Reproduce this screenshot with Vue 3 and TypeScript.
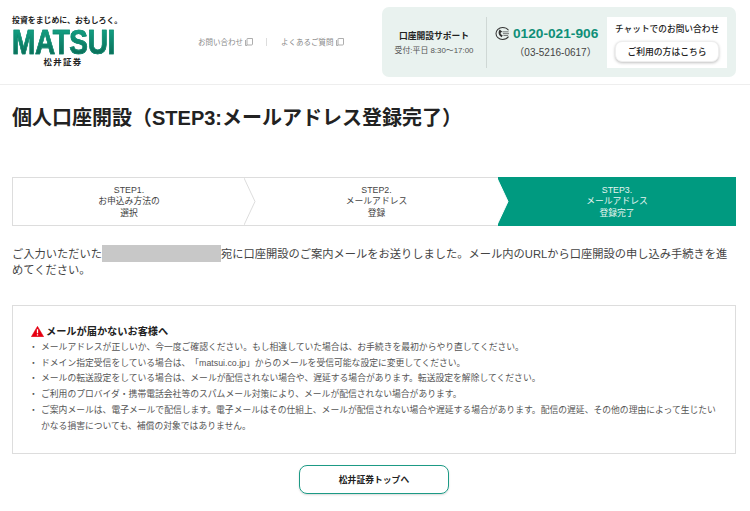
<script setup lang="ts">
interface Step { no: string; lines: string[]; active?: boolean }
const steps: Step[] = [
  { no: 'STEP1.', lines: ['お申込み方法の', '選択'] },
  { no: 'STEP2.', lines: ['メールアドレス', '登録'] },
  { no: 'STEP3.', lines: ['メールアドレス', '登録完了'], active: true },
]
const notes: string[] = [
  'メールアドレスが正しいか、今一度ご確認ください。もし相違していた場合は、お手続きを最初からやり直してください。',
  'ドメイン指定受信をしている場合は、「matsui.co.jp」からのメールを受信可能な設定に変更してください。',
  'メールの転送設定をしている場合は、メールが配信されない場合や、遅延する場合があります。転送設定を解除してください。',
  'ご利用のプロバイダ・携帯電話会社等のスパムメール対策により、メールが配信されない場合があります。',
  'ご案内メールは、電子メールで配信します。電子メールはその仕組上、メールが配信されない場合や遅延する場合があります。配信の遅延、その他の理由によって生じたいかなる損害についても、補償の対象ではありません。',
]
</script>

<template>
  <div class="page">
    <header class="header">
      <div class="logo">
        <div class="tagline">投資をまじめに、おもしろく。</div>
        <div class="wordmark"><span>MATSUI</span></div>
        <div class="kanji">松井証券</div>
      </div>
      <nav class="links">
        <a class="link">お問い合わせ
          <svg class="ext" viewBox="0 0 8 8" width="8" height="8"><path d="M2.5 .5h5v5.500a1 1 0 0 1-1 1h-4.500v-6a.5.5 0 0 1 .5-.5z" fill="none" stroke="#999" stroke-width=".8"/><path d="M.5 2v5.500h1.500" fill="none" stroke="#999" stroke-width=".8"/></svg>
        </a>
        <span class="sep"></span>
        <a class="link">よくあるご質問
          <svg class="ext" viewBox="0 0 8 8" width="8" height="8"><path d="M2.5 .5h5v5.500a1 1 0 0 1-1 1h-4.500v-6a.5.5 0 0 1 .5-.5z" fill="none" stroke="#999" stroke-width=".8"/><path d="M.5 2v5.500h1.500" fill="none" stroke="#999" stroke-width=".8"/></svg>
        </a>
      </nav>
      <section class="support">
        <div class="sup-label">
          <strong>口座開設サポート</strong>
          <span>受付:平日 8:30～17:00</span>
        </div>
        <div class="sup-phone">
          <div class="tel">
            <svg viewBox="0 0 16 14" width="15" height="13"><path d="M14.500 3.500C13 1.500 10.500.6 8 .6 4 .6 1 3.500 1 7s3 6.400 7 6.400c2.500 0 5-1 6.500-3" fill="none" stroke="#333" stroke-width="1.100"/><path d="M5 2.800c-2 2.500-1.500 6 2 8.300l1.300-1.900-2-1.300c-.4-.7-.4-1.500-.1-2.100l1.600-.8z" fill="#333"/><path d="M8 5.200h6.500M8.500 7.200h6.500M9 9.200h5" stroke="#333" stroke-width=".7"/></svg>
            <b>0120-021-906</b>
          </div>
          <div class="tel-sub">（03-5216-0617）</div>
        </div>
        <div class="sup-chat">
          <div class="chat-title">チャットでのお問い合わせ</div>
          <button class="chat-btn">ご利用の方はこちら</button>
        </div>
      </section>
    </header>

    <main class="main">
      <h1 class="title">個人口座開設（STEP3:メールアドレス登録完了）</h1>

      <ol class="steps">
        <li v-for="s in steps" :key="s.no" class="step" :class="{ active: s.active }">
          <span>{{ s.no }}</span>
          <span v-for="l in s.lines" :key="l">{{ l }}</span>
          <svg v-if="!s.active" class="chev" viewBox="0 0 12 48" width="12" height="48" preserveAspectRatio="none"><path d="M0 0L11 24L0 48" fill="#fff" stroke="#ddd" stroke-width="1"/></svg>
        </li>
      </ol>

      <p class="lead">ご入力いただいた<span class="mask"></span>宛に口座開設のご案内メールをお送りしました。メール内のURLから口座開設の申し込み手続きを進めてください。</p>

      <section class="notice">
        <h2 class="notice-title">
          <svg viewBox="0 0 14 12" width="13" height="11"><path d="M7 .4L13.700 11.700H.3z" fill="#e60012" stroke="#e60012" stroke-width=".6" stroke-linejoin="round"/><path d="M7 3.500v4.500M7 9v1.400" stroke="#fff" stroke-width="1.400"/></svg>
          メールが届かないお客様へ
        </h2>
        <ul class="notes">
          <li v-for="n in notes" :key="n">{{ n }}</li>
        </ul>
      </section>

      <div class="actions">
        <a class="top-btn">松井証券トップへ</a>
      </div>
    </main>
  </div>
</template>

<style>
html, body { margin: 0; background: #fff; }
</style>

<style scoped>
.page {
  width: 750px;
  height: 511px;
  overflow: hidden;
  font-family: "Liberation Sans", "Noto Sans CJK JP", sans-serif;
  color: #333;
}
.header {
  height: 84px;
  border-bottom: 1px solid #eee;
  display: flex;
  align-items: flex-start;
  box-sizing: content-box;
  padding: 0 14px 0 12px;
}
.logo { width: 108px; margin-top: 16px; display: flex; flex-direction: column; }
.tagline { font-size: 7.900px; font-weight: 700; line-height: 10px; white-space: nowrap; color: #222; }
.wordmark { height: 27px; line-height: 27px; margin-top: 3px; }
.wordmark span {
  display: inline-block;
  font-size: 35px;
  line-height: 26px;
  font-weight: 700;
  letter-spacing: -.5px;
  transform: scale(.8, 1);
  transform-origin: 0 50%;
  background: linear-gradient(#12a083, #0b6d58);
  -webkit-background-clip: text;
  background-clip: text;
  color: transparent;
  -webkit-text-stroke: .7px #0f8a70;
  white-space: nowrap;
}
.kanji { font-size: 8.400px; font-weight: 700; text-align: center; width: 102px; line-height: 11px; color: #222; font-family: "Noto Sans CJK JP", serif; letter-spacing: 1.400px; }
.links { display: flex; align-items: center; margin: 36px 0 0 78px; width: 192px; font-size: 7.500px; color: #888; }
.link { display: inline-flex; align-items: center; gap: 2px; white-space: nowrap; }
.sep { width: 1px; height: 8px; background: #ddd; margin: 0 14px 0 13px; }
.support {
  margin: 7px 0 0 auto;
  width: 354px;
  height: 70px;
  box-sizing: border-box;
  background: #e9f2ef;
  border-radius: 7px;
  display: flex;
  align-items: center;
  padding: 9px;
}
.sup-label {
  width: 86px;
  margin-right: 9px;
  display: flex;
  flex-direction: column;
  align-items: center;
  gap: 2px;
  font-size: 7.900px;
  color: #555;
  white-space: nowrap;
}
.sup-label strong { font-size: 8.750px; color: #222; font-weight: 700; }
.sup-phone {
  height: 51px;
  width: 121px;
  border-left: 1px solid #cfd8d5;
  display: flex;
  flex-direction: column;
  justify-content: center;
  padding-left: 8px;
  box-sizing: border-box;
  gap: 3px;
}
.tel { display: flex; align-items: center; gap: 3px; }
.tel b { font-size: 13.700px; color: #0f8f78; font-weight: 700; white-space: nowrap; }
.tel-sub { font-size: 10px; color: #444; white-space: nowrap; text-align: center; padding-left: 9px; }
.sup-chat {
  width: 120px;
  height: 51px;
  background: #fff;
  box-sizing: border-box;
  display: flex;
  flex-direction: column;
  align-items: center;
  justify-content: flex-start;
  padding-top: 6px;
}
.chat-title { font-size: 8.700px; line-height: 12px; color: #222; white-space: nowrap; font-weight: 500; }
.chat-btn {
  margin-top: 6px;
  width: 104px;
  height: 21px;
  padding: 0;
  border: 1px solid #eee;
  border-radius: 7px;
  background: #fff;
  box-shadow: 0 1px 3px rgba(0,0,0,.25);
  font: 500 8.800px "Liberation Sans", "Noto Sans CJK JP", sans-serif;
  color: #222;
}
.main { padding: 0 14px 0 12px; }
.title { margin: 21px 0 0; font-size: 20px; line-height: 24px; font-weight: 700; color: #222; white-space: nowrap; }
.steps {
  list-style: none;
  margin: 47px 0 0;
  padding: 0;
  height: 49px;
  box-sizing: border-box;
  border: 1px solid #ddd;
  display: grid;
  grid-template-columns: 232px 253px 1fr;
}
.step {
  position: relative;
  display: flex;
  flex-direction: column;
  align-items: center;
  justify-content: center;
  padding-top: 1px;
  font-size: 8.800px;
  line-height: 11.500px;
  color: #444;
}
.step:nth-child(2) { padding-left: 10px; }
.step.active {
  background: #009a80;
  color: #e6f5f1;
  margin: -1px -1px -1px 0;
}
.chev { position: absolute; right: -11px; top: 0; height: 47px; z-index: 1; }
.step:nth-child(2) .chev path { stroke: #fff; }
.lead { margin: 19px 0 0; font-size: 11.250px; line-height: 16px; color: #444; }
.mask { display: inline-block; width: 119px; height: 17px; background: #c8c8c8; vertical-align: -4px; }
.notice {
  margin-top: 27px;
  height: 149px;
  box-sizing: border-box;
  border: 1px solid #ddd;
  padding: 18px 18px 0 18px;
}
.notice-title {
  margin: 0;
  display: flex;
  align-items: center;
  gap: 2px;
  font-size: 10.200px;
  line-height: 15px;
  font-weight: 700;
  color: #222;
}
.notes { list-style: none; margin: 1px 0 0; padding: 0 0 0 10px; font-size: 8.800px; line-height: 15.700px; color: #555; text-spacing-trim: space-all; }
.notes li { position: relative; }
.notes li::before { content: "・"; position: absolute; left: -12px; }
.actions { display: flex; justify-content: center; margin-top: 11px; }
.top-btn {
  width: 150px;
  height: 29px;
  box-sizing: border-box;
  border: 1.500px solid #1c9a85;
  border-radius: 8px;
  display: flex;
  align-items: center;
  justify-content: center;
  font-size: 8.800px;
  font-weight: 700;
  color: #222;
  box-shadow: 0 1px 2px rgba(0,0,0,.15);
}
</style>
